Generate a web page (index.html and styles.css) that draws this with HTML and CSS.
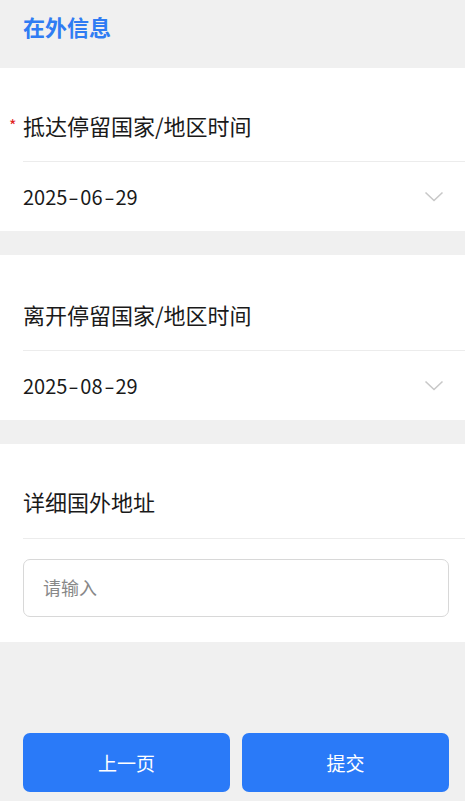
FILE: index.html
```html
<!DOCTYPE html>
<html lang="zh-CN">
<head>
<meta charset="utf-8">
<link rel="stylesheet" href="styles.css">
</head>
<body>
<div class="page">
  <div class="header">在外信息</div>

  <div class="card card-first">
    <div class="label"><span class="req">*</span>抵达停留国家/地区时间</div>
    <div class="select">
      <span class="value">2025<span class="sep">-</span>06<span class="sep">-</span>29</span>
      <svg class="chev" width="20" height="12" viewBox="0 0 20 12"><path d="M1.5 1.5 L10 9.5 L18.5 1.5" fill="none" stroke="#c8c8c8" stroke-width="1.6"/></svg>
    </div>
  </div>

  <div class="card card-second">
    <div class="label">离开停留国家/地区时间</div>
    <div class="select">
      <span class="value">2025<span class="sep">-</span>08<span class="sep">-</span>29</span>
      <svg class="chev" width="20" height="12" viewBox="0 0 20 12"><path d="M1.5 1.5 L10 9.5 L18.5 1.5" fill="none" stroke="#c8c8c8" stroke-width="1.6"/></svg>
    </div>
  </div>

  <div class="card card-last">
    <div class="label label-addr">详细国外地址</div>
    <div class="input-row">
      <div class="input">请输入</div>
    </div>
  </div>

  <div class="actions">
    <button class="btn">上一页</button>
    <button class="btn">提交</button>
  </div>
</div>
</body>
</html>
```
FILE: styles.css
```css
* { box-sizing: border-box; }
html, body { margin: 0; padding: 0; }
body {
  background: #f0f0f0;
  font-family: "Noto Sans CJK SC", "Noto Sans", sans-serif;
  color: #1a1a1a;
}
.page {
  min-height: 801px;
  display: flex;
  flex-direction: column;
}
.header {
  height: 68px;
  padding: 11px 0 0 23px;
  font-size: 22px;
  font-weight: 700;
  line-height: 30px;
  color: #2f7cf3;
}
.card {
  background: #fff;
  padding-left: 23px;
  margin-bottom: 24px;
}
.card-last { margin-bottom: 0; }
.label {
  position: relative;
  font-size: 22px;
  line-height: 28px;
  padding: 43px 0 22px;
  border-bottom: 1px solid #ececec;
}
.card-second .label { padding: 45px 0 22px; }
.label-addr { padding: 43px 0 23px; }
.req {
  position: absolute;
  left: -14px;
  top: 43px;
  color: #e02020;
  font-size: 16px;
  line-height: 28px;
}
.select {
  height: 68px;
  display: flex;
  align-items: center;
  justify-content: space-between;
  padding-right: 21px;
}
.card-first .select { height: 69px; }
.card-second .select { height: 69px; }
.value {
  font-size: 20px;
  padding-bottom: 1px;
}
.sep {
  display: inline-block;
  margin: 0 3px;
  transform: scaleX(1.5);
}
.chev { display: block; }
.input-row {
  padding: 20px 16px 25px 0;
}
.input {
  height: 58px;
  border: 1px solid #d8d8d8;
  border-radius: 7px;
  padding-left: 19px;
  padding-bottom: 2px;
  display: flex;
  align-items: center;
  font-size: 18px;
  color: #888;
}
.actions {
  margin-top: auto;
  display: flex;
  gap: 12px;
  padding: 0 16px 9px 23px;
}
.btn {
  flex: 1;
  height: 59px;
  border: none;
  border-radius: 7px;
  background: #2a7af8;
  color: #fff;
  font-family: inherit;
  font-size: 19px;
}
```
